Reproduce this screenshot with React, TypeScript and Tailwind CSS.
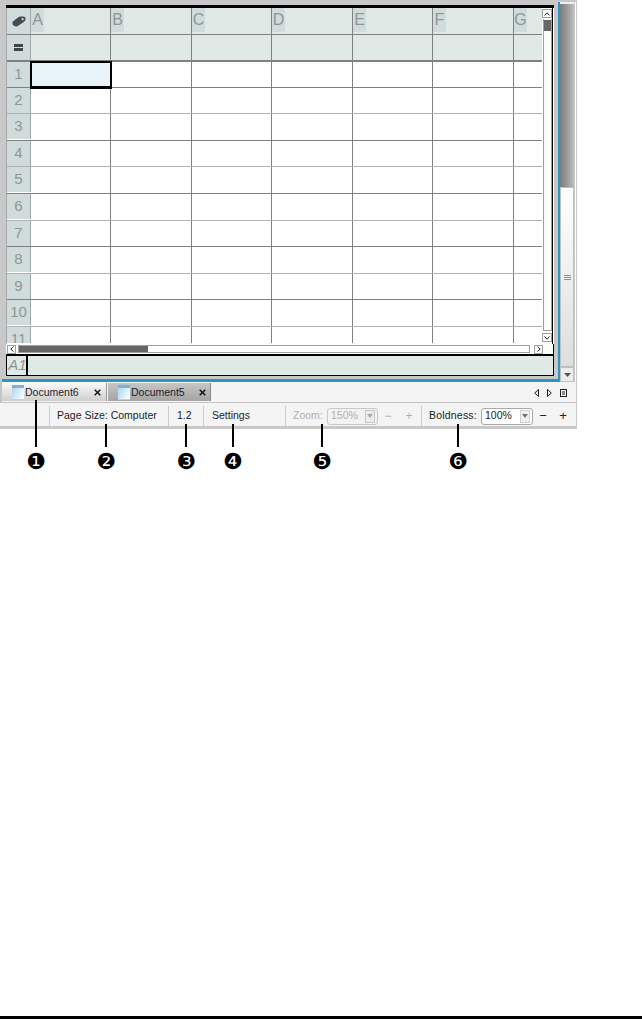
import React from "react";

const rows = [
  { n: "1", h: "h-[26px]", line: "border-[#808080]" },
  { n: "2", h: "h-[26px]", line: "border-[#b0b0b0]" },
  { n: "3", h: "h-[27px]", line: "border-[#808080]" },
  { n: "4", h: "h-[26px]", line: "border-[#b0b0b0]" },
  { n: "5", h: "h-[27px]", line: "border-[#808080]" },
  { n: "6", h: "h-[27px]", line: "border-[#b0b0b0]" },
  { n: "7", h: "h-[26px]", line: "border-[#808080]" },
  { n: "8", h: "h-[27px]", line: "border-[#b0b0b0]" },
  { n: "9", h: "h-[26px]", line: "border-[#808080]" },
  { n: "10", h: "h-[27px]", line: "border-[#b0b0b0]" },
  { n: "11", h: "h-[17px]", line: "border-transparent" },
];

const cols = [
  { l: "A", w: "w-[80px]" },
  { l: "B", w: "w-[81px]" },
  { l: "C", w: "w-[80px]" },
  { l: "D", w: "w-[81px]" },
  { l: "E", w: "w-[80px]" },
  { l: "F", w: "w-[81px]" },
  { l: "G", w: "w-[28px]" },
];

function DocIcon({ id }: { id: string }) {
  return (
    <svg width="12" height="15" viewBox="0 0 12 15" className="shrink-0">
      <defs>
        <linearGradient id={id} x1="0" y1="0" x2="1" y2="0.6">
          <stop offset="0" stopColor="#a6d2ec" />
          <stop offset="1" stopColor="#f6fafd" />
        </linearGradient>
      </defs>
      <rect x="0" y="0" width="12" height="15" fill={`url(#${id})`} />
      <rect x="0" y="0" width="12" height="3" fill="#78b4d8" />
      <rect x="0" y="14" width="12" height="1" fill="#b8d4e6" />
    </svg>
  );
}

function CloseX() {
  return (
    <svg width="7" height="7" viewBox="0 0 7 7" className="shrink-0">
      <path d="M0.7 0.7 L6.3 6.3 M6.3 0.7 L0.7 6.3" stroke="#1a1a1a" strokeWidth="1.6" />
    </svg>
  );
}

function Tab({ active, name }: { active: boolean; name: string }) {
  return (
    <div
      className={
        active
          ? "flex h-[18px] w-[105px] items-center border-r border-[#9a9a9a] bg-gradient-to-b from-[#fafafa] to-[#cfcfcf] pl-[10px] pr-[5px]"
          : "ml-px flex h-[18px] w-[103px] items-center border-r border-[#8a8a8a] bg-gradient-to-b from-[#c6c6c6] to-[#a4a4a4] pl-[10px] pr-[4px]"
      }
    >
      <DocIcon id={active ? "doca" : "docb"} />
      <span className="ml-px flex-1 pt-px text-[#1c1c2c]">{name}</span>
      <CloseX />
    </div>
  );
}

function Combo({ value, disabled }: { value: string; disabled?: boolean }) {
  return (
    <div
      className={
        disabled
          ? "flex h-[17px] w-[51px] items-center rounded-[3px] border border-[#c8c8c8] bg-[#f2f2f2] pl-[3px] pr-[2px] text-[#b0b0b0]"
          : "flex h-[17px] w-[52px] items-center rounded-[3px] border border-[#a8a8a8] bg-white pl-[3px] pr-[2px] text-[#1c1c2c]"
      }
    >
      <span className="flex-1">{value}</span>
      <span
        className={
          disabled
            ? "flex h-[13px] w-[10px] items-center justify-center border border-[#c8c8c8] bg-[#ececec]"
            : "flex h-[13px] w-[10px] items-center justify-center border border-[#d0d0d0] bg-[#f0f0f0]"
        }
      >
        <svg width="6" height="4" viewBox="0 0 6 4">
          <path d="M0 0 H6 L3 4 Z" fill={disabled ? "#a8a8a8" : "#707070"} />
        </svg>
      </span>
    </div>
  );
}

function Callout({ left, top, glyph }: { left: string; top: string; glyph: string }) {
  return (
    <div className={`absolute ${left} ${top} flex w-0 flex-col items-center`}>
      <div className={top === "top-[400px]" ? "h-[47px] w-[2px] shrink-0 bg-black" : "h-[23px] w-[2px] shrink-0 bg-black"} />
      <span className="mt-[2px] font-['DejaVu_Sans',sans-serif] text-[22px] leading-[25px] text-black">{glyph}</span>
    </div>
  );
}

export default function App() {
  return (
    <div className="relative flex h-[1019px] w-[642px] flex-col overflow-hidden bg-white font-['Liberation_Sans',Arial,sans-serif] text-[10.5px]">
      <div className="w-[577px] bg-[#c8c8c8]">
        {/* Upper workspace */}
        <div className="flex h-[382px] pt-[2px] pl-[2px]">
          <div className="h-[380px] w-[558px] border-r-2 border-b-[3px] border-[#2c95c2] pt-[3px] pl-[4px] pr-[4px]">
            <div className="flex h-[371px] w-[548px] flex-col border-t-[3px] border-black bg-white">
              {/* Grid + vertical scrollbar */}
              <div className="flex h-[336px]">
                <div className="w-[536px] overflow-hidden border-l border-[#a8a8a8]">
                  {/* Header row */}
                  <div className="flex h-[27px] border-b border-[#808080] bg-[#e1e9e7]">
                    <div className="flex w-[24px] items-center justify-center border-r border-[#a0a8a8] bg-[#cfdcdb]">
                      <svg width="14" height="11" viewBox="0 0 14 11">
                        <path
                          d="M0.4 7 Q0.2 5.8 1.5 5 L6 1.4 Q7.2 0.4 9 0.4 L11.5 0.4 Q13.8 0.6 13.6 3 Q13.4 5 11.8 6 L6.2 9.8 Q4.8 10.8 3.2 10.2 L1.4 9.4 Q0.5 8.6 0.4 7 Z M10.6 2 a1.1 1.1 0 1 0 0.1 0 Z"
                          fill="#454b4b"
                          fillRule="evenodd"
                        />
                      </svg>
                    </div>
                    {cols.map((c, i) => (
                      <div key={c.l} className={`${c.w} flex ${i < 6 ? "border-r border-[#808080]" : ""}`}>
                        <span className="flex h-[24px] w-[13px] items-center justify-center bg-[#cfdcdb] text-[16px] text-[#8f9595]">
                          {c.l}
                        </span>
                      </div>
                    ))}
                  </div>
                  {/* Formula row */}
                  <div className="flex h-[27px] border-b-2 border-[#808080] bg-[#e1e9e7]">
                    <div className="flex w-[24px] flex-col items-center justify-center gap-[1px] border-r border-[#a0a8a8] bg-[#cfdcdb]">
                      <div className="h-[3px] w-[9px] bg-[#404545]" />
                      <div className="h-[3px] w-[9px] bg-[#404545]" />
                    </div>
                    {cols.map((c, i) => (
                      <div key={c.l} className={`${c.w} ${i < 6 ? "border-r border-[#808080]" : ""}`} />
                    ))}
                  </div>
                  {/* Data rows */}
                  {rows.map((r, ri) => (
                    <div key={r.n} className={`flex ${r.h} border-b ${r.line} overflow-hidden`}>
                      <div className="flex h-[25px] w-[24px] shrink-0 items-center justify-center border-r border-[#a0a8a8] bg-[#cfdcdb] text-[15px] text-[#8f9595]">
                        {r.n}
                      </div>
                      {cols.map((c, i) => (
                        <div
                          key={c.l}
                          className={`${c.w} shrink-0 ${i < 6 ? "border-r border-[#808080]" : ""} ${
                            ri === 0 && i === 0 ? "relative bg-[#e8f3f9]" : ""
                          }`}
                        />
                      ))}
                    </div>
                  ))}
                </div>
                {/* Vertical inner scrollbar */}
                <div className="flex w-[11px] flex-col items-center border-r border-black bg-white pt-px">
                  <div className="flex h-[9px] w-[10px] items-center justify-center border border-[#a0a0a0]">
                    <svg width="6" height="4" viewBox="0 0 6 4">
                      <path d="M0.5 3.5 L3 0.8 L5.5 3.5" fill="none" stroke="#222" />
                    </svg>
                  </div>
                  <div className="mt-[1px] h-[312px] w-[9px] border-x border-b border-[#a0a0a0] pt-px">
                    <div className="h-[11px] w-[7px] bg-[#666]" />
                  </div>
                  <div className="mt-[2px] flex h-[9px] w-[10px] items-center justify-center border border-[#a0a0a0]">
                    <svg width="6" height="4" viewBox="0 0 6 4">
                      <path d="M0.5 0.5 L3 3.2 L5.5 0.5" fill="none" stroke="#222" />
                    </svg>
                  </div>
                </div>
              </div>
              {/* Horizontal scrollbar */}
              <div className="flex h-[10px] items-center border-r border-black pl-px">
                <div className="flex h-[9px] w-[9px] items-center justify-center border border-[#a0a0a0]">
                  <svg width="4" height="6" viewBox="0 0 4 6">
                    <path d="M3.5 0.5 L0.8 3 L3.5 5.5" fill="none" stroke="#222" />
                  </svg>
                </div>
                <div className="ml-[2px] h-[8px] w-[512px] border border-[#a0a0a0]">
                  <div className="h-[6px] w-[129px] bg-[#666]" />
                </div>
                <div className="ml-[4px] flex h-[9px] w-[9px] items-center justify-center border border-[#a0a0a0]">
                  <svg width="4" height="6" viewBox="0 0 4 6">
                    <path d="M0.5 0.5 L3.2 3 L0.5 5.5" fill="none" stroke="#222" />
                  </svg>
                </div>
              </div>
              {/* Formula bar */}
              <div className="flex h-[22px] border-t-2 border-x border-b border-black bg-[#e1e9e7]">
                <div className="flex w-[21px] items-center justify-center border-r-2 border-black pl-[2px] text-[15px] italic text-[#8f9595]">
                  A1
                </div>
              </div>
            </div>
          </div>
          {/* Outer scrollbar */}
          <div className="flex w-[14px] flex-col">
            <div className="h-[2px] bg-[#eeeeee]" />
            <div className="h-[183px] bg-gradient-to-r from-[#7c7c7c] to-[#bcbcbc]" />
            <div className="flex h-[180px] items-center justify-center border border-[#c0c0c0] bg-gradient-to-b from-white to-[#dedede]">
              <div className="flex flex-col gap-px">
                <div className="h-px w-[7px] bg-[#909090]" />
                <div className="h-px w-[7px] bg-[#909090]" />
                <div className="h-px w-[7px] bg-[#909090]" />
              </div>
            </div>
            <div className="flex h-[15px] items-center justify-center border border-[#c0c0c0] bg-[#ececec]">
              <svg width="7" height="4" viewBox="0 0 7 4">
                <path d="M0 0 H7 L3.5 4 Z" fill="#555" />
              </svg>
            </div>
          </div>
          <div className="ml-px w-px bg-white" />
        </div>

        {/* Tabs + status */}
        <div className="mr-px bg-[#f4f4f4]">
          <div className="flex h-[21px] items-start border-b border-l-2 border-[#c4c4c4] pt-px">
            <Tab active name="Document6" />
            <Tab active={false} name="Document5" />
            <div className="ml-auto flex h-[18px] items-center gap-[8px] pt-[2px] pr-[9px]">
              <svg width="5" height="8" viewBox="0 0 5 8">
                <path d="M4.5 0.5 V7.5 L0.7 4 Z" fill="none" stroke="#222" />
              </svg>
              <svg width="5" height="8" viewBox="0 0 5 8">
                <path d="M0.5 0.5 V7.5 L4.3 4 Z" fill="none" stroke="#222" />
              </svg>
              <svg width="7" height="8" viewBox="0 0 7 8">
                <rect x="0.5" y="0.5" width="6" height="7" fill="none" stroke="#222" />
                <path d="M2 3 H5 M2 5 H5" stroke="#222" />
              </svg>
            </div>
          </div>
          <div className="flex h-[23px] items-stretch pt-[3px] text-[#1c1c2c]">
            <div className="w-[49px]" />
            <div className="flex w-[119px] items-center border-l border-[#cccccc] pl-[7px]">Page Size: Computer</div>
            <div className="flex w-[35px] items-center border-l border-[#cccccc] pl-[8px]">1.2</div>
            <div className="flex w-[82px] items-center border-l border-[#cccccc] pl-[8px]">Settings</div>
            <div className="flex w-[136px] items-center border-l border-[#cccccc] pl-[7px] text-[#b0b0b0]">
              <span className="w-[34px]">Zoom:</span>
              <Combo value="150%" disabled />
              <span className="ml-[6px] w-[8px] text-center text-[12px]">−</span>
              <span className="ml-[13px] w-[8px] text-center text-[12px]">+</span>
            </div>
            <div className="flex flex-1 items-center border-l border-[#cccccc] pl-[7px]">
              <span className="w-[52px] tracking-[0.2px]">Boldness:</span>
              <Combo value="100%" />
              <span className="ml-[6px] w-[8px] text-center text-[13px]">−</span>
              <span className="ml-[12px] w-[8px] text-center text-[13px]">+</span>
            </div>
          </div>
        </div>
        <div className="h-[3px]" />
      </div>

      {/* Selected cell A1 */}
      <div className="absolute left-[30px] top-[61px] h-[28px] w-[82px] border-[2px] border-b-[3px] border-black" />

      {/* Callouts */}
      <Callout left="left-[36px]" top="top-[400px]" glyph="❶" />
      <Callout left="left-[106px]" top="top-[424px]" glyph="❷" />
      <Callout left="left-[186px]" top="top-[424px]" glyph="❸" />
      <Callout left="left-[233px]" top="top-[424px]" glyph="❹" />
      <Callout left="left-[322px]" top="top-[424px]" glyph="❺" />
      <Callout left="left-[458px]" top="top-[424px]" glyph="❻" />

      <div className="mt-auto h-[3px] bg-black" />
    </div>
  );
}
